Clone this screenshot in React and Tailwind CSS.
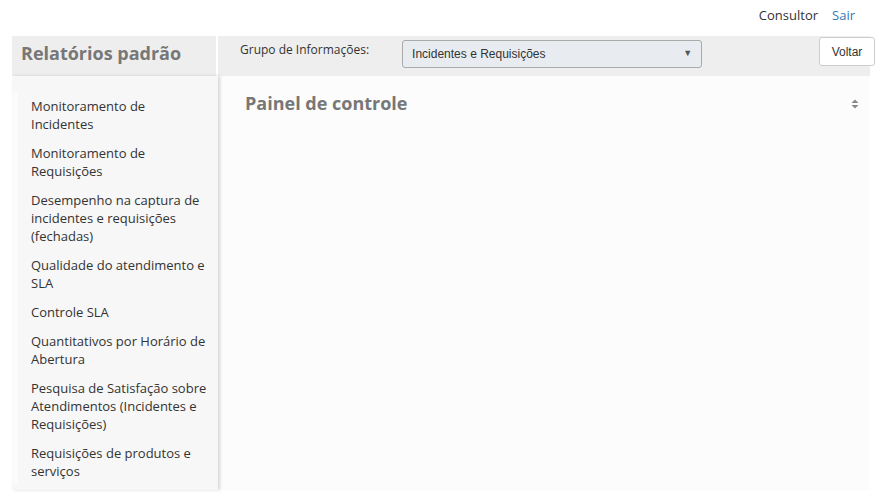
import React from 'react';

const menu = [
  'Monitoramento de Incidentes',
  'Monitoramento de Requisições',
  'Desempenho na captura de incidentes e requisições (fechadas)',
  'Qualidade do atendimento e SLA',
  'Controle SLA',
  'Quantitativos por Horário de Abertura',
  'Pesquisa de Satisfação sobre Atendimentos (Incidentes e Requisições)',
  'Requisições de produtos e serviços',
];

function SortIcon() {
  return (
    <svg width="8" height="10" viewBox="0 0 8 10" className="text-[#888]">
      <path d="M4 0.5 L7.5 4 H0.5 Z" fill="currentColor" />
      <path d="M4 9.5 L7.5 6 H0.5 Z" fill="currentColor" />
    </svg>
  );
}

export default function App() {
  return (
    <div className="w-[886px] h-[494px] bg-white overflow-hidden text-[#333] font-['Open_Sans',sans-serif]">
      <div className="h-[36px] flex items-center justify-end gap-[14px] pr-[31px] text-[13px] pb-[4px]">
        <span>Consultor</span>
        <span className="text-[#337ab7]">Sair</span>
      </div>

      <div className="ml-[12px] w-[858px]">
        <div className="h-[40px] flex bg-[#eeeeee]">
          <div className="w-[206px] border-r-2 border-white pl-[9px] flex items-start pt-[4px]">
            <h1 className="text-[18px] font-bold text-[#777]">Relatórios padrão</h1>
          </div>
          <div className="flex-1 flex items-start relative">
            <span className="ml-[22px] mt-[5px] text-[12px]">Grupo de Informações:</span>
            <div className="ml-[33px] mt-[4px] w-[300px] h-[28px] flex items-center justify-between px-[9px] bg-[#e8ecf0] border border-[#aaa] rounded-[3px] text-[12px] font-['Liberation_Sans',Arial,sans-serif]">
              <span>Incidentes e Requisições</span>
              <span className="text-[9px] text-[#555]">▼</span>
            </div>
            <button className="absolute right-[-5px] top-[1px] w-[56px] h-[29px] bg-white border border-[#ccc] rounded-[3px] text-[12px] font-['Liberation_Sans',Arial,sans-serif]">
              Voltar
            </button>
          </div>
        </div>

        <div className="h-[414px] flex">
          <aside className="w-[206px] bg-[#f7f7f7] shadow-[2px_0_3px_rgba(0,0,0,0.15)] pt-[16px] pb-[6px] z-10">
            <ul className="h-full border-l-[6px] border-[#fbfbfb] pl-[13px] pr-[8px] pt-[5px] space-y-[11px] text-[13px] leading-[18px]">
              {menu.map(m => (
                <li key={m} className="w-[176px]">{m}</li>
              ))}
            </ul>
          </aside>
          <main className="flex-1 bg-[#fcfcfc] pl-[27px] pr-[11px] pt-[14px]">
            <div className="flex items-center justify-between">
              <h2 className="text-[18px] font-bold text-[#777]">Painel de controle</h2>
              <SortIcon />
            </div>
          </main>
        </div>
      </div>
    </div>
  );
}
